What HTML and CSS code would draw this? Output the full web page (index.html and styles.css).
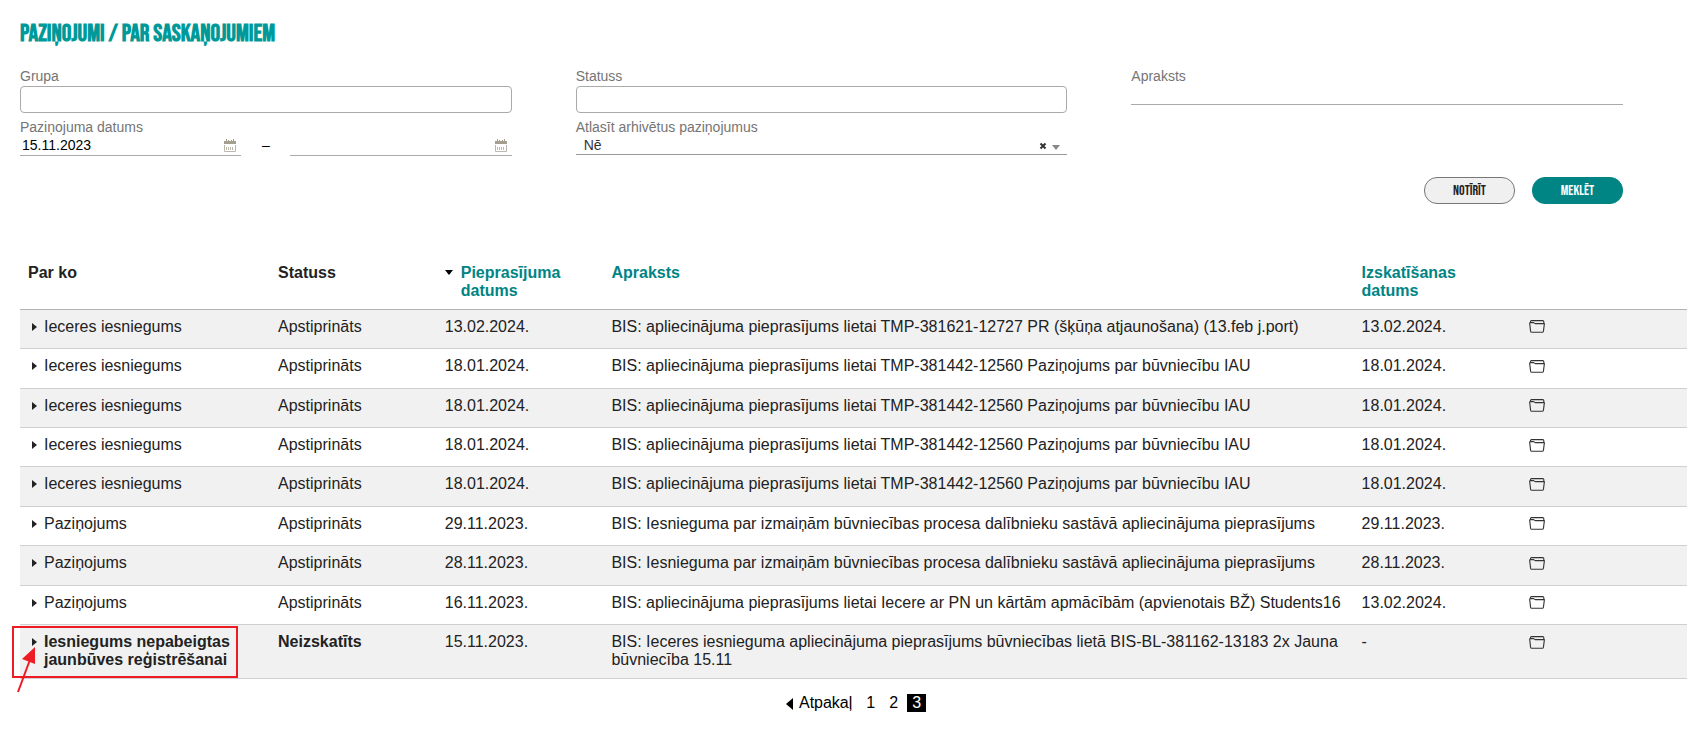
FILE: index.html
```
<!DOCTYPE html>
<html lang="lv">
<head>
<meta charset="utf-8">
<title>Paziņojumi</title>
<link rel="stylesheet" href="styles.css">
</head>
<body>
<svg class="sprite" aria-hidden="true">
  <symbol id="calendar" viewBox="0 0 12 13">
    <path fill="#a59f90" d="M0 2h2V0h1v2h1V1h1v1h2V1h1v1h1V0h1v2h2v3H0z"/>
    <path fill="none" stroke="#bdb8ad" d="M.5 6v6.500h11V6"/>
    <path fill="none" stroke="#bdb8ad" stroke-width="3" stroke-dasharray="1 1" d="M2 9.500h8"/>
  </symbol>
  <symbol id="folder" viewBox="0 0 16 13">
    <path fill="none" stroke="#333" stroke-width="1.100" stroke-linejoin="round" d="M1.500 2.400V1.600Q1.500.6 2.500.6H13.800Q14.800.6 14.800 1.600V3M.6 2.600H4.600L6.200 3.600H15.400L14.400 11.400Q14.200 12.200 13.400 12.200H2.600Q1.800 12.200 1.600 11.400L.6 2.600"/>
  </symbol>
</svg>
<main class="page">
  <h1 class="title">Paziņojumi / par saskaņojumiem</h1>
  <form class="filters">
    <div class="field"><label for="grupa">Grupa</label><input id="grupa" class="box" type="text"></div>
    <div class="field"><label for="statuss">Statuss</label><input id="statuss" class="box" type="text"></div>
    <div class="field"><label for="apraksts">Apraksts</label><input id="apraksts" class="line" type="text"></div>
    <div class="field">
      <label for="no">Paziņojuma datums</label>
      <div class="range">
        <span class="date"><input id="no" type="text" value="15.11.2023"><svg class="calendar"><use href="#calendar"/></svg></span>
        <span class="dash">–</span>
        <span class="date"><input type="text" aria-label="Paziņojuma datums līdz"><svg class="calendar"><use href="#calendar"/></svg></span>
      </div>
    </div>
    <div class="field">
      <label for="arhivs">Atlasīt arhivētus paziņojumus</label>
      <div class="choice">
        <select id="arhivs"><option>Nē</option></select>
        <button class="clear" type="button" aria-label="Notīrīt izvēli"><svg viewBox="0 0 8 8"><path d="M1.500 1.500l5 5m0-5l-5 5" stroke="#333" stroke-width="2"/></svg></button>
        <svg class="caret" viewBox="0 0 8 5"><path d="M0 0h8L4 5z" fill="#888"/></svg>
      </div>
    </div>
    <div class="actions">
      <button class="button" type="reset">Notīrīt</button>
      <button class="button primary" type="button">Meklēt</button>
    </div>
  </form>
  <table class="list">
    <colgroup><col class="wide"><col class="narrow"><col class="narrow"><col class="text"><col class="narrow"><col class="narrow"></colgroup>
    <thead><tr><th>Par ko</th><th>Statuss</th><th><a class="sorted" href="#"><svg viewBox="0 0 8 5"><path d="M0 0h8L4 5z"/></svg>Pieprasījuma datums</a></th><th><a href="#">Apraksts</a></th><th><a href="#">Izskatīšanas<br>datums</a></th><th></th></tr></thead>
    <tbody>
      <tr><td><div class="item"><svg class="arrow" viewBox="0 0 5 8"><path d="M0 0l5 4-5 4z"/></svg>Ieceres iesniegums</div></td><td>Apstiprināts</td><td>13.02.2024.</td><td>BIS: apliecinājuma pieprasījums lietai TMP-381621-12727 PR (šķūņa atjaunošana) (13.feb j.port)</td><td>13.02.2024.</td><td class="tools"><button class="archive" type="button" aria-label="Arhivēt"><svg><use href="#folder"/></svg></button></td></tr>
      <tr><td><div class="item"><svg class="arrow" viewBox="0 0 5 8"><path d="M0 0l5 4-5 4z"/></svg>Ieceres iesniegums</div></td><td>Apstiprināts</td><td>18.01.2024.</td><td>BIS: apliecinājuma pieprasījums lietai TMP-381442-12560 Paziņojums par būvniecību IAU</td><td>18.01.2024.</td><td class="tools"><button class="archive" type="button" aria-label="Arhivēt"><svg><use href="#folder"/></svg></button></td></tr>
      <tr><td><div class="item"><svg class="arrow" viewBox="0 0 5 8"><path d="M0 0l5 4-5 4z"/></svg>Ieceres iesniegums</div></td><td>Apstiprināts</td><td>18.01.2024.</td><td>BIS: apliecinājuma pieprasījums lietai TMP-381442-12560 Paziņojums par būvniecību IAU</td><td>18.01.2024.</td><td class="tools"><button class="archive" type="button" aria-label="Arhivēt"><svg><use href="#folder"/></svg></button></td></tr>
      <tr><td><div class="item"><svg class="arrow" viewBox="0 0 5 8"><path d="M0 0l5 4-5 4z"/></svg>Ieceres iesniegums</div></td><td>Apstiprināts</td><td>18.01.2024.</td><td>BIS: apliecinājuma pieprasījums lietai TMP-381442-12560 Paziņojums par būvniecību IAU</td><td>18.01.2024.</td><td class="tools"><button class="archive" type="button" aria-label="Arhivēt"><svg><use href="#folder"/></svg></button></td></tr>
      <tr><td><div class="item"><svg class="arrow" viewBox="0 0 5 8"><path d="M0 0l5 4-5 4z"/></svg>Ieceres iesniegums</div></td><td>Apstiprināts</td><td>18.01.2024.</td><td>BIS: apliecinājuma pieprasījums lietai TMP-381442-12560 Paziņojums par būvniecību IAU</td><td>18.01.2024.</td><td class="tools"><button class="archive" type="button" aria-label="Arhivēt"><svg><use href="#folder"/></svg></button></td></tr>
      <tr><td><div class="item"><svg class="arrow" viewBox="0 0 5 8"><path d="M0 0l5 4-5 4z"/></svg>Paziņojums</div></td><td>Apstiprināts</td><td>29.11.2023.</td><td>BIS: Iesnieguma par izmaiņām būvniecības procesa dalībnieku sastāvā apliecinājuma pieprasījums</td><td>29.11.2023.</td><td class="tools"><button class="archive" type="button" aria-label="Arhivēt"><svg><use href="#folder"/></svg></button></td></tr>
      <tr><td><div class="item"><svg class="arrow" viewBox="0 0 5 8"><path d="M0 0l5 4-5 4z"/></svg>Paziņojums</div></td><td>Apstiprināts</td><td>28.11.2023.</td><td>BIS: Iesnieguma par izmaiņām būvniecības procesa dalībnieku sastāvā apliecinājuma pieprasījums</td><td>28.11.2023.</td><td class="tools"><button class="archive" type="button" aria-label="Arhivēt"><svg><use href="#folder"/></svg></button></td></tr>
      <tr><td><div class="item"><svg class="arrow" viewBox="0 0 5 8"><path d="M0 0l5 4-5 4z"/></svg>Paziņojums</div></td><td>Apstiprināts</td><td>16.11.2023.</td><td>BIS: apliecinājuma pieprasījums lietai Iecere ar PN un kārtām apmācībām (apvienotais BŽ) Students16</td><td>13.02.2024.</td><td class="tools"><button class="archive" type="button" aria-label="Arhivēt"><svg><use href="#folder"/></svg></button></td></tr>
      <tr><td class="marked"><div class="item unread"><svg class="arrow" viewBox="0 0 5 8"><path d="M0 0l5 4-5 4z"/></svg><span>Iesniegums nepabeigtas<br>jaunbūves reģistrēšanai</span></div><span class="frame"></span><svg class="pointer" viewBox="0 0 24 46"><path d="M1 45L14 10" fill="none" stroke="#ed1c24" stroke-width="2"/><path d="M18 0v17L5 12z" fill="#ed1c24"/></svg></td><td class="unread">Neizskatīts</td><td>15.11.2023.</td><td>BIS: Ieceres iesnieguma apliecinājuma pieprasījums būvniecības lietā BIS-BL-381162-13183 2x Jauna būvniecība 15.11</td><td>-</td><td class="tools"><button class="archive" type="button" aria-label="Arhivēt"><svg><use href="#folder"/></svg></button></td></tr>
    </tbody>
  </table>
  <nav class="pages">
    <a class="back" href="#"><svg viewBox="0 0 7 12"><path d="M7 0v12L0 6z"/></svg>Atpakaļ</a>
    <a href="#">1</a><a href="#">2</a><a class="current" href="#" aria-current="page">3</a>
  </nav>
</main>
</body>
</html>
```
FILE: styles.css
```
* { box-sizing: border-box; }
body { margin: 0; background: #fff; color: #222; font: 16px/1.15 "Liberation Sans", Arial, sans-serif; }
a { color: inherit; text-decoration: none; }
input, select, button { font: inherit; color: inherit; margin: 0; padding: 0; border: 0; border-radius: 0; background: none; }
svg { display: block; }
.sprite { position: absolute; width: 0; height: 0; }
.page { padding: 21px 14px 0 20px; }
.title { margin: 0; color: #099; font: bold 24px/26px "Bebas Neue", "Roboto Condensed", "Liberation Sans", sans-serif; text-transform: uppercase; white-space: nowrap; }
.filters { display: grid; grid-template-columns: repeat(3, 1fr); column-gap: 64px; padding: 21px 64px 0 0; }
.field { height: 51px; color: #000; font-size: 14px; }
.field label { display: block; padding-bottom: 2px; line-height: 16px; color: #757575; }
.box { display: block; width: 100%; height: 27px; padding: 0 8px; border: 1px solid #aaa; border-radius: 4px; }
.line { display: block; width: 100%; height: 19px; border-bottom: 1px solid #aaa; }
.range { display: grid; grid-template-columns: 1fr 49px 1fr; }
.date { display: flex; align-items: center; height: 19px; padding: 0 5px 2px 2px; border-bottom: 1px solid #aaa; }
.date input { flex: 1; min-width: 0; }
.calendar { width: 12px; height: 13px; }
.dash { text-align: center; }
.choice { display: flex; align-items: center; height: 18px; padding-right: 7px; border-bottom: 1px solid #999; }
.choice select { flex: 1; appearance: none; padding-left: 8px; color: #333; }
.clear svg { width: 8px; height: 8px; }
.caret { width: 8px; height: 5px; margin: 4px 0 0 5px; }
.actions { grid-column: 1 / -1; display: flex; justify-content: flex-end; gap: 17px; padding-top: 7px; }
.button { width: 91px; height: 27px; border: 1px solid #777; border-radius: 13px; background: #f0f0f0; font: 14px/24px "Bebas Neue", "Roboto Condensed", "Liberation Sans", sans-serif; text-transform: uppercase; }
.primary { border-color: #008484; background: #008484; color: #fff; }
.list { width: 100%; margin-top: 50px; table-layout: fixed; border-collapse: separate; border-spacing: 0; }
.wide { width: 15%; }
.narrow { width: 10%; }
.text { width: 45%; }
.list th, .list td { padding: 8px; vertical-align: top; text-align: left; border-bottom: 1px solid #d0d0d0; }
.list th { padding-top: 10px; border-color: #b3b3b3; }
.list th a { color: #008484; }
.sorted { display: flex; gap: 8px; }
.sorted svg { flex: none; width: 8px; height: 5px; margin-top: 6px; fill: #000; }
.list tbody tr:nth-child(odd) { background: #f1f1f1; }
.list .tools { line-height: 1.4; }
.archive { display: block; height: 1.4em; padding: 0 0 4px 1px; }
.archive svg { width: 16px; height: 13px; }
.item { display: flex; gap: 7px; padding-left: 4px; }
.arrow { flex: none; width: 5px; height: 8px; margin-top: 5px; fill: #222; }
.unread { font-weight: bold; }
.marked { position: relative; }
.frame { position: absolute; left: -8px; top: 1px; width: 226px; height: 52px; border: 2px solid #ed1c24; }
.pointer { position: absolute; left: -3px; top: 22px; width: 24px; height: 46px; }
.pages { display: flex; justify-content: center; align-items: center; gap: 4px; padding: 15px 0; color: #000; line-height: 18px; }
.pages a { padding: 0 5px; }
.pages .back { display: flex; align-items: center; gap: 6px; }
.back svg { width: 7px; height: 12px; margin-top: 3px; }
.pages .current { background: #000; color: #fff; }
```
